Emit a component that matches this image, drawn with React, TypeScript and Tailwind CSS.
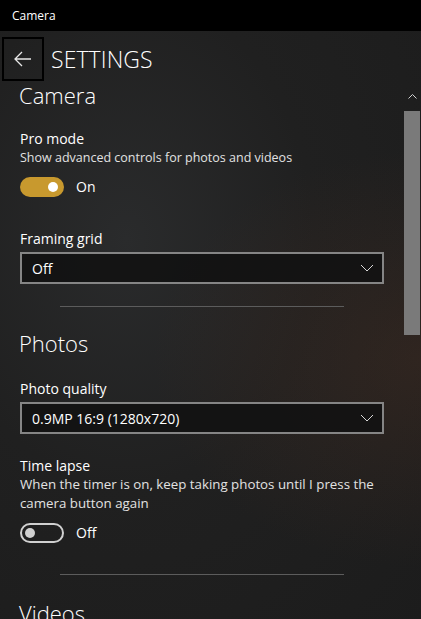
import React from 'react';

const font = { fontFamily: '"Open Sans", "Noto Sans", sans-serif' };

const Toggle: React.FC<{ on: boolean }> = ({ on }) => (
  <div className="flex items-center gap-3">
    {on ? (
      <div className="w-[44px] h-[20px] rounded-full bg-[#c8992e] flex items-center justify-end pr-[6px]">
        <div className="w-[10px] h-[10px] rounded-full bg-white" />
      </div>
    ) : (
      <div className="w-[44px] h-[20px] rounded-full border-2 border-[#d0d0d0] flex items-center pl-[3px]">
        <div className="w-[10px] h-[10px] rounded-full bg-[#d0d0d0]" />
      </div>
    )}
    <span className="text-[14px] text-white">{on ? 'On' : 'Off'}</span>
  </div>
);

const Dropdown: React.FC<{ value: string }> = ({ value }) => (
  <div className="w-[364px] h-[32px] border-2 border-[#858585] bg-[#121212]/90 flex items-center justify-between pl-[10px] pr-[8px]">
    <span className="text-[14px] text-white">{value}</span>
    <svg width="14" height="8" viewBox="0 0 14 8" fill="none">
      <path d="M1 1 L7 7 L13 1" stroke="#d8d8d8" strokeWidth="1" />
    </svg>
  </div>
);

const Divider = () => (
  <div className="ml-[40px] w-[284px] h-px bg-[#5c5c5c]" />
);

export default function App() {
  return (
    <div
      className="w-[421px] h-[619px] flex flex-col overflow-hidden bg-[#1e1e1e] text-white"
      style={font}
    >
      <div className="h-[31px] bg-black flex items-center pl-[12px] text-[12px] text-white shrink-0">
        Camera
      </div>
      <div className="flex-1 flex flex-col bg-[radial-gradient(ellipse_at_30%_35%,#2a2b2c_0%,#202020_45%,#1c1c1c_100%)] relative">
        <div className="absolute inset-0 bg-[radial-gradient(ellipse_at_100%_55%,rgba(80,50,35,0.35)_0%,rgba(0,0,0,0)_45%)] pointer-events-none" />
        <div className="flex items-center pt-[6px] shrink-0 relative">
          <div className="ml-[2px] w-[42px] h-[44px] border-2 border-black flex items-center justify-center">
            <svg width="18" height="16" viewBox="0 0 18 16" fill="none">
              <path d="M8 1 L1 8 L8 15 M1 8 H17" stroke="#e8e8e8" strokeWidth="1.3" />
            </svg>
          </div>
          <span className="ml-[7px] text-[23px] font-light tracking-[0.1px] leading-none">SETTINGS</span>
        </div>
        <div className="flex-1 flex min-h-0 relative">
          <div className="flex-1 overflow-hidden pl-[20px]">
            <div className="text-[22px] font-light leading-[28px] -ml-[1px]">Camera</div>
            <div className="mt-[21px] text-[14px] leading-[18px]">Pro mode</div>
            <div className="mt-[1px] text-[12.5px] leading-[18px] text-[#e2e2e2]">Show advanced controls for photos and videos</div>
            <div className="mt-[9px]">
              <Toggle on={true} />
            </div>
            <div className="mt-[33px] text-[14px] leading-[18px]">Framing grid</div>
            <div className="mt-[4px]">
              <Dropdown value="Off" />
            </div>
            <div className="mt-[22px]">
              <Divider />
            </div>
            <div className="mt-[22px] text-[22px] font-light leading-[28px] -ml-[1px]">Photos</div>
            <div className="mt-[23px] text-[14px] leading-[18px]">Photo quality</div>
            <div className="mt-[4px]">
              <Dropdown value="0.9MP 16:9 (1280x720)" />
            </div>
            <div className="mt-[23px] text-[14px] leading-[18px]">Time lapse</div>
            <div className="w-[364px] text-[13.3px] leading-[19px] text-[#e2e2e2]">
              When the timer is on, keep taking photos until I press the camera button again
            </div>
            <div className="mt-[9px]">
              <Toggle on={false} />
            </div>
            <div className="mt-[31px]">
              <Divider />
            </div>
            <div className="mt-[24px] text-[22px] font-light leading-[28px] -ml-[1px]">Videos</div>
          </div>
          <div className="w-[17px] shrink-0 flex flex-col items-start">
            <div className="h-[30px] w-[16px] flex items-center justify-center">
              <svg width="9" height="5" viewBox="0 0 9 5" fill="none">
                <path d="M0.5 4.5 L4.5 0.5 L8.5 4.5" stroke="#d0d0d0" strokeWidth="1" />
              </svg>
            </div>
            <div className="w-[16px] h-[224px] bg-[#7a7a7a]" />
          </div>
        </div>
      </div>
    </div>
  );
}
